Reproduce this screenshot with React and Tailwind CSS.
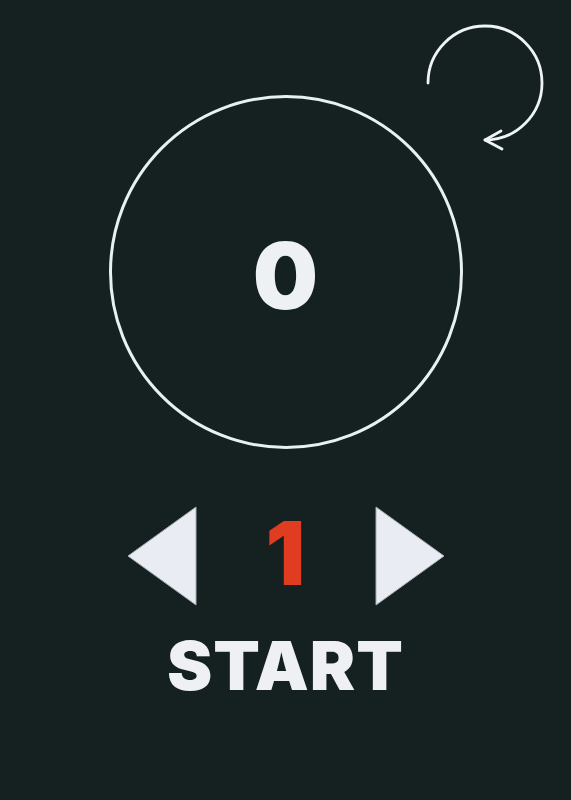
import React, { useState } from "react";

const font = { fontFamily: "Inter, 'DejaVu Sans', sans-serif" };

function ResetIcon() {
  return (
    <svg width="130" height="140" viewBox="0 0 130 140" fill="none">
      {/* arc centered at (64,70), r=57, from left going over the top to the bottom */}
      <path
        d="M7 70 A57 57 0 1 1 64 127"
        stroke="#eef3f3"
        strokeWidth="2.8"
        strokeLinecap="round"
      />
      <path
        d="M80 118 L64 127 L81 136"
        stroke="#eef3f3"
        strokeWidth="2.8"
        strokeLinecap="round"
        strokeLinejoin="round"
      />
    </svg>
  );
}

function Triangle({ dir }) {
  const points = dir === "left" ? "1,50 69,1 69,99" : "1,1 69,50 1,99";
  return (
    <svg width="70" height="100" viewBox="0 0 70 100">
      <polygon points={points} fill="#e9ecf3" stroke="#a9adb3" strokeWidth="1" />
    </svg>
  );
}

export default function App() {
  const [count, setCount] = useState(0);
  const [level, setLevel] = useState(1);

  return (
    <div className="relative min-h-[800px] w-full bg-[#152020] flex flex-col items-center" style={font}>
      <button
        className="absolute left-[421px] top-[13px]"
        onClick={() => setCount(0)}
        aria-label="reset"
      >
        <ResetIcon />
      </button>

      <div className="mt-[95px] w-[354px] h-[354px] rounded-full border-[3px] border-[#e8f0f0] flex items-center justify-center">
        <span className="text-[92px] leading-none font-black text-[#eef1f3] mt-[8px]">{count}</span>
      </div>

      <div className="mt-[57px] flex items-center gap-[29px]">
        <button onClick={() => setLevel(Math.max(1, level - 1))}>
          <Triangle dir="left" />
        </button>
        <div className="w-[120px] text-center text-[88px] leading-none font-black text-[#e03c22] -mt-[6px]">
          {level}
        </div>
        <button onClick={() => setLevel(level + 1)}>
          <Triangle dir="right" />
        </button>
      </div>

      <button
        className="mt-[25px] text-[68px] leading-none font-black tracking-[1px] text-[#eef0f4]"
        onClick={() => setCount(count + 1)}
      >
        START
      </button>
    </div>
  );
}
